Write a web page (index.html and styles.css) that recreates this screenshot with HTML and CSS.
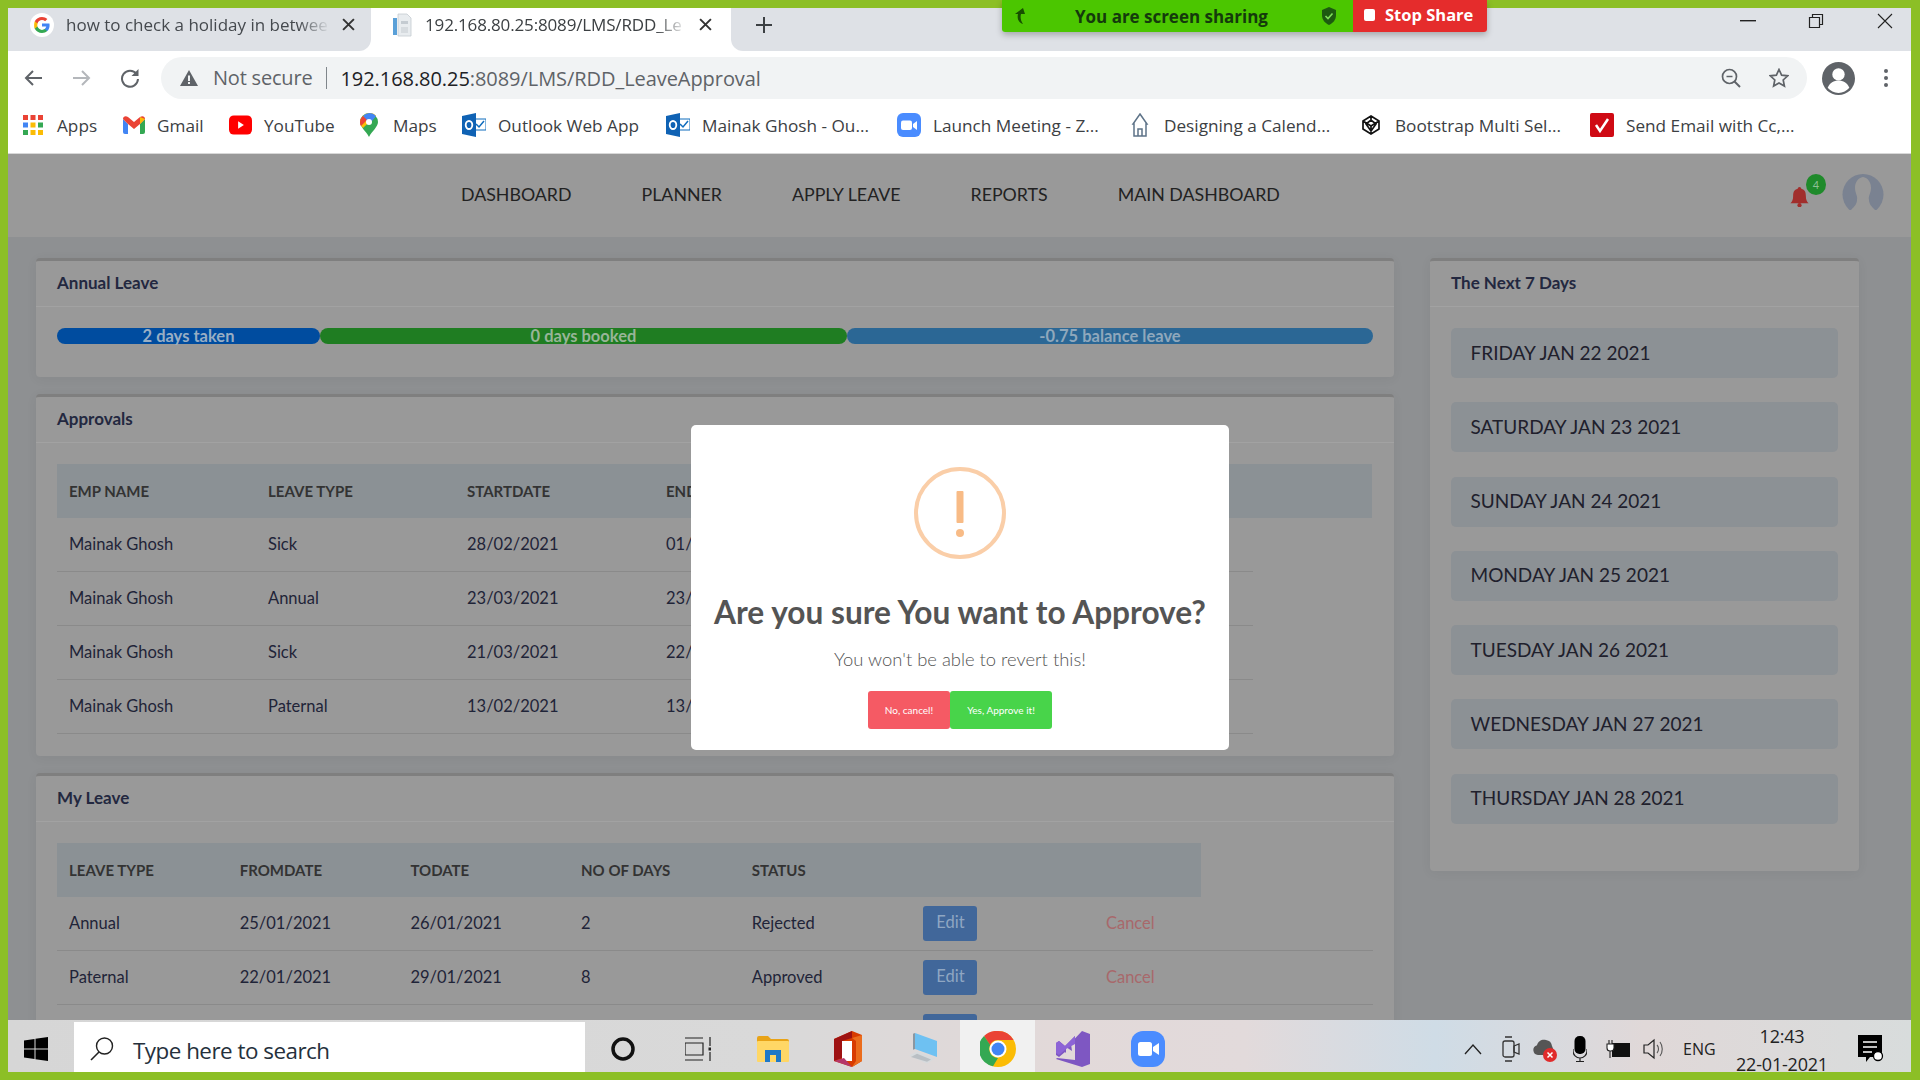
FILE: index.html
```html
<!DOCTYPE html>
<html lang="en">
<head>
<meta charset="utf-8">
<title>RDD Leave Approval</title>
<link rel="stylesheet" href="styles.css">
</head>
<body>
<div class="screen">
  <div class="sharebar">
    <div class="share-green">
      <svg class="share-arrow" viewBox="0 0 14 16"><path d="M10 0 2 6h3c-1 4 0 8 5 10-2-3-3-6-2-10h4z" fill="#174f00"/></svg>
      <span class="share-text">You are screen sharing</span>
      <svg class="share-shield" viewBox="0 0 16 18"><path d="M8 0l7 3v5c0 5-3 8-7 10-4-2-7-5-7-10V3z" fill="#1d5a10"/><path d="M4.500 9l2.500 2.500 4.500-5" fill="none" stroke="#7fe05a" stroke-width="1.600"/></svg>
    </div>
    <div class="share-red"><span class="stop-square"></span><span>Stop Share</span></div>
  </div>

  <div class="tabstrip">
    <div class="tab tab-off">
      <svg class="tab-icon" viewBox="0 0 24 24"><circle cx="12" cy="12" r="12" fill="#fff"/><path d="M19.600 12.200c0-.6-.1-1.100-.2-1.600H12v3h4.300c-.2 1-.8 1.800-1.600 2.400v2h2.600c1.500-1.400 2.300-3.400 2.300-5.800z" fill="#4285f4"/><path d="M12 20c2.200 0 4-.7 5.300-1.900l-2.600-2c-.7.500-1.600.8-2.700.8-2.100 0-3.900-1.400-4.500-3.300H4.800v2.100C6.100 18.300 8.800 20 12 20z" fill="#34a853"/><path d="M7.500 13.600c-.3-1-.3-2.100 0-3.200V8.300H4.800c-.9 1.800-.9 5.500 0 7.400z" fill="#fbbc05"/><path d="M12 7.100c1.200 0 2.200.4 3.100 1.200l2.300-2.300C16 4.800 14.200 4 12 4 8.800 4 6.100 5.800 4.800 8.300l2.700 2.100C8.100 8.500 9.900 7.100 12 7.100z" fill="#ea4335"/></svg>
      <span class="tab-title tab-title-off">how to check a holiday in betwee</span>
      <svg class="tab-x" viewBox="0 0 12 12"><path d="M1 1l10 10M11 1 1 11" stroke="#333" stroke-width="1.800"/></svg>
    </div>
    <div class="tab tab-on">
      <svg class="tab-icon-doc" viewBox="0 0 24 24"><path d="M7 1h9l4 4v18H7z" fill="#e8ecef" stroke="#c4cbd1" stroke-width=".8"/><rect x="2" y="5" width="4" height="17" fill="#5aa0d8"/><rect x="10" y="8" width="7" height="3" fill="#c4cbd1"/><rect x="10" y="14" width="7" height="6" fill="#d6dbdf"/></svg>
      <span class="tab-title tab-title-on">192.168.80.25:8089/LMS/RDD_Le</span>
      <svg class="tab-x" viewBox="0 0 12 12"><path d="M1 1l10 10M11 1 1 11" stroke="#333" stroke-width="1.800"/></svg>
    </div>
    <div class="tab-rest">
      <svg class="tab-plus" viewBox="0 0 18 18"><path d="M9 1v16M1 9h16" stroke="#3c4043" stroke-width="2"/></svg>
      <div class="winctl">
        <svg class="win-min" viewBox="0 0 16 2"><rect width="16" height="1.400" fill="#222"/></svg>
        <svg class="win-max" viewBox="0 0 16 16"><path d="M1.500 4.500h10v10h-10zM4.500 4.500v-3h10v10h-3" fill="none" stroke="#222" stroke-width="1.200"/></svg>
        <svg class="win-close" viewBox="0 0 16 16"><path d="M1 1l14 14M15 1 1 15" stroke="#222" stroke-width="1.100"/></svg>
      </div>
    </div>
  </div>

  <div class="toolbar">
    <svg class="tb-nav" viewBox="0 0 20 20"><path d="M19 10H3M10 3l-7 7 7 7" fill="none" stroke="#5f6368" stroke-width="2"/></svg>
    <svg class="tb-nav" viewBox="0 0 20 20"><path d="M1 10h16M10 3l7 7-7 7" fill="none" stroke="#b4b7bb" stroke-width="2"/></svg>
    <svg class="tb-nav tb-reload" viewBox="0 0 20 20"><path d="M16.500 6A8 8 0 1 0 18 11" fill="none" stroke="#5f6368" stroke-width="2"/><path d="M18.500 1v7h-7z" fill="#5f6368"/></svg>
    <div class="omnibox">
      <svg class="warn" viewBox="0 0 18 16"><path d="M9 0l9 16H0z" fill="#5f6368"/><rect x="8" y="5.500" width="2" height="5.500" fill="#f1f3f4"/><rect x="8" y="12" width="2" height="2" fill="#f1f3f4"/></svg>
      <span class="notsecure">Not secure</span>
      <span class="url"><span class="url-host">192.168.80.25</span>:8089/LMS/RDD_LeaveApproval</span>
      <svg class="omni-zoom" viewBox="0 0 20 20"><circle cx="8.500" cy="8.500" r="7" fill="none" stroke="#5f6368" stroke-width="1.700"/><path d="M13.500 13.500 19 19" stroke="#5f6368" stroke-width="2"/><path d="M5.500 8.500h6" stroke="#5f6368" stroke-width="1.500"/></svg>
      <svg class="omni-star" viewBox="0 0 20 20"><path d="M10 1.500l2.600 5.600 6.100.7-4.500 4.200 1.200 6L10 15l-5.400 3 1.200-6L1.300 7.800l6.100-.7z" fill="none" stroke="#5f6368" stroke-width="1.700"/></svg>
    </div>
    <svg class="avatar-chrome" viewBox="0 0 32 32"><circle cx="16" cy="16" r="16" fill="#5f6368"/><circle cx="16" cy="12" r="6" fill="#fff"/><path d="M5.500 25c2-5 6-7 10.500-7s8.500 2 10.500 7c-2.500 3-6.300 5-10.500 5S8 28 5.500 25z" fill="#fff"/></svg>
    <svg class="menu-dots" viewBox="0 0 4 18"><circle cx="2" cy="2" r="2" fill="#5f6368"/><circle cx="2" cy="9" r="2" fill="#5f6368"/><circle cx="2" cy="16" r="2" fill="#5f6368"/></svg>
  </div>

  <div class="bookmarks">
    <div class="bm">
      <svg class="bm-icon bm-apps" viewBox="0 0 20 20"><g><rect width="5" height="5" fill="#ea4335"/><rect x="7.500" width="5" height="5" fill="#ea4335"/><rect x="15" width="5" height="5" fill="#ea4335"/><rect y="7.500" width="5" height="5" fill="#4285f4"/><rect x="7.500" y="7.500" width="5" height="5" fill="#fbbc05"/><rect x="15" y="7.500" width="5" height="5" fill="#34a853"/><rect y="15" width="5" height="5" fill="#34a853"/><rect x="7.500" y="15" width="5" height="5" fill="#fbbc05"/><rect x="15" y="15" width="5" height="5" fill="#fbbc05"/></g></svg>
      <span>Apps</span>
    </div>
    <div class="bm">
      <svg class="bm-icon bm-gmail" viewBox="0 0 22 18"><path d="M0 3v13a2 2 0 0 0 2 2h3V8z" fill="#4285f4"/><path d="M22 3v13a2 2 0 0 1-2 2h-3V8z" fill="#34a853"/><path d="M0 3c0-3 3-3.500 5-2l6 5 6-5c2-1.500 5-1 5 2l-5 5-6 5-6-5z" fill="#ea4335"/><path d="M17 1l5 2-5 5z" fill="#fbbc05"/></svg>
      <span>Gmail</span>
    </div>
    <div class="bm">
      <svg class="bm-icon bm-yt" viewBox="0 0 24 20"><rect width="24" height="20" rx="5" fill="#f00"/><path d="M9.500 6v8l6-4z" fill="#fff"/></svg>
      <span>YouTube</span>
    </div>
    <div class="bm">
      <svg class="bm-icon bm-maps" viewBox="0 0 18 24"><path d="M9 0a9 9 0 0 1 9 9c0 5-6 9-9 15C6 18 0 14 0 9a9 9 0 0 1 9-9z" fill="#34a853"/><path d="M3 3a9 9 0 0 1 13-.5L3 15C1 13 0 11 0 9c0-2 1-4 3-6z" fill="#fbbc05"/><path d="M9 0a9 9 0 0 1 7 3.300L11 9H7L3 3a9 9 0 0 1 6-3z" fill="#4285f4"/><path d="M3 3 7 7 1 13C0 11.500 0 10 0 9c0-2 1-4 3-6z" fill="#ea4335"/><circle cx="9" cy="9" r="3" fill="#fff"/></svg>
      <span>Maps</span>
    </div>
    <div class="bm">
      <svg class="bm-icon bm-outlook" viewBox="0 0 24 24"><path d="M11 6h13v11H11z" fill="#fff" stroke="#0f6cbd" stroke-width="1"/><path d="M14 11l3 3 5-6" fill="none" stroke="#0f6cbd" stroke-width="1.500"/><path d="M0 3l14-3v24L0 21z" fill="#0f62b4"/><ellipse cx="7" cy="12" rx="3.300" ry="4" fill="none" stroke="#fff" stroke-width="1.800"/></svg>
      <span>Outlook Web App</span>
    </div>
    <div class="bm">
      <svg class="bm-icon bm-outlook" viewBox="0 0 24 24"><path d="M11 6h13v11H11z" fill="#fff" stroke="#0f6cbd" stroke-width="1"/><path d="M14 11l3 3 5-6" fill="none" stroke="#0f6cbd" stroke-width="1.500"/><path d="M0 3l14-3v24L0 21z" fill="#0f62b4"/><ellipse cx="7" cy="12" rx="3.300" ry="4" fill="none" stroke="#fff" stroke-width="1.800"/></svg>
      <span>Mainak Ghosh - Ou...</span>
    </div>
    <div class="bm">
      <svg class="bm-icon bm-zoom" viewBox="0 0 24 24"><rect width="24" height="24" rx="6" fill="#4a8cff"/><rect x="4" y="7.500" width="11" height="9.500" rx="2" fill="#fff"/><path d="M16 11l4-3v9l-4-3z" fill="#fff"/></svg>
      <span>Launch Meeting - Z...</span>
    </div>
    <div class="bm">
      <svg class="bm-icon bm-house" viewBox="0 0 18 24"><path d="M9 1l7 10-1 0v12H3V11H2z M7 23v-7h4v7" fill="none" stroke="#5e7388" stroke-width="1.500"/></svg>
      <span>Designing a Calend...</span>
    </div>
    <div class="bm">
      <svg class="bm-icon bm-boot" viewBox="0 0 20 20"><path d="M10 1l8 5v8l-8 5-8-5V6z M10 1v6M2 6l8 5 8-5M10 19v-8M5 9l5-4 5 4-5 7z" fill="none" stroke="#111" stroke-width="1.700"/></svg>
      <span>Bootstrap Multi Sel...</span>
    </div>
    <div class="bm">
      <svg class="bm-icon bm-check" viewBox="0 0 24 24"><rect width="24" height="24" rx="2" fill="#cf0a14"/><path d="M6 12l4 6 8-12" fill="none" stroke="#fff" stroke-width="2.500"/></svg>
      <span>Send Email with Cc,...</span>
    </div>
  </div>

  <div class="page">
    <nav class="sitenav">
      <a>DASHBOARD</a><a>PLANNER</a><a>APPLY LEAVE</a><a>REPORTS</a><a>MAIN DASHBOARD</a>
      <div class="nav-user">
        <div class="bell-wrap">
          <svg class="bell" viewBox="0 0 20 22"><path d="M10 0c1 0 2 1 2 2 4 1 5 4 5 8 0 4 1 6 3 8H0c2-2 3-4 3-8 0-4 1-7 5-8 0-1 1-2 2-2z" fill="#a12e2c"/><circle cx="10" cy="20" r="2.300" fill="#a12e2c"/></svg>
          <span class="badge">4</span>
        </div>
        <svg class="user-pic" viewBox="0 0 42 36"><circle cx="21" cy="20.500" r="20.500" fill="#7a8291"/><path d="M13 14c0-6 3-10 8-11 5 1 8 5 8 11 0 5-3 8-2 12 0 4 3 7 6 10H9c3-3 6-6 6-10 1-4-2-7-2-12z" fill="#999"/></svg>
      </div>
    </nav>

    <main class="dash">
      <div class="col-left">
        <section class="panel">
          <h2 class="panel-head">Annual Leave</h2>
          <div class="panel-body body-bar">
            <div class="bar">
              <div class="seg seg-taken">2 days taken</div>
              <div class="seg seg-booked">0 days booked</div>
              <div class="seg seg-balance">-0.75 balance leave</div>
            </div>
          </div>
        </section>

        <section class="panel">
          <h2 class="panel-head">Approvals</h2>
          <div class="panel-body">
            <div class="row row-head cols-approval head-wide">
              <span>EMP NAME</span><span>LEAVE TYPE</span><span>STARTDATE</span><span>ENDDATE</span>
            </div>
            <div class="row cols-approval row-approval"><span>Mainak Ghosh</span><span>Sick</span><span>28/02/2021</span><span>01/03/2021</span></div>
            <div class="row cols-approval row-approval"><span>Mainak Ghosh</span><span>Annual</span><span>23/03/2021</span><span>23/03/2021</span></div>
            <div class="row cols-approval row-approval"><span>Mainak Ghosh</span><span>Sick</span><span>21/03/2021</span><span>22/03/2021</span></div>
            <div class="row cols-approval row-approval"><span>Mainak Ghosh</span><span>Paternal</span><span>13/02/2021</span><span>13/02/2021</span></div>
          </div>
        </section>

        <section class="panel">
          <h2 class="panel-head">My Leave</h2>
          <div class="panel-body">
            <div class="row row-head cols-leave head-narrow">
              <span>LEAVE TYPE</span><span>FROMDATE</span><span>TODATE</span><span>NO OF DAYS</span><span>STATUS</span>
            </div>
            <div class="row cols-leave"><span>Annual</span><span>25/01/2021</span><span>26/01/2021</span><span>2</span><span>Rejected</span><a class="btn-edit">Edit</a><a class="link-cancel">Cancel</a></div>
            <div class="row cols-leave"><span>Paternal</span><span>22/01/2021</span><span>29/01/2021</span><span>8</span><span>Approved</span><a class="btn-edit">Edit</a><a class="link-cancel">Cancel</a></div>
            <div class="row cols-leave"><span></span><span></span><span></span><span></span><span></span><a class="btn-edit"></a></div>
          </div>
        </section>
      </div>

      <aside class="col-right">
        <section class="panel panel-days">
          <h2 class="panel-head">The Next 7 Days</h2>
          <div class="panel-body days">
            <div class="day">FRIDAY JAN 22 2021</div>
            <div class="day">SATURDAY JAN 23 2021</div>
            <div class="day">SUNDAY JAN 24 2021</div>
            <div class="day">MONDAY JAN 25 2021</div>
            <div class="day">TUESDAY JAN 26 2021</div>
            <div class="day">WEDNESDAY JAN 27 2021</div>
            <div class="day">THURSDAY JAN 28 2021</div>
          </div>
        </section>
      </aside>
    </main>

    <div class="modal">
      <svg class="modal-icon" viewBox="0 0 92 92"><circle cx="46" cy="46" r="44" fill="none" stroke="#facea8" stroke-width="4"/><rect x="42.500" y="24" width="7" height="32" rx="1" fill="#f8bb86"/><circle cx="46" cy="66" r="4" fill="#f8bb86"/></svg>
      <h1 class="modal-title">Are you sure You want to Approve?</h1>
      <p class="modal-text">You won't be able to revert this!</p>
      <div class="modal-actions">
        <button class="mbtn mbtn-no">No, cancel!</button>
        <button class="mbtn mbtn-yes">Yes, Approve it!</button>
      </div>
    </div>
  </div>

  <div class="taskbar">
    <div class="tb-start">
      <svg class="win-logo" viewBox="0 0 24 24"><path d="M0 3.500 10.500 2v9.500H0zM11.500 1.800 24 0v11.500H11.500zM0 12.500h10.500V22L0 20.500zM11.500 12.500H24V24l-12.500-1.800z" fill="#000"/></svg>
    </div>
    <div class="tb-search">
      <svg class="search-lens" viewBox="0 0 24 24"><circle cx="14.500" cy="9" r="8" fill="none" stroke="#222" stroke-width="1.400"/><path d="M9 15 1 23" stroke="#222" stroke-width="1.600"/></svg>
      <span>Type here to search</span>
    </div>
    <div class="tb-cell"><svg class="ti ti-cortana" viewBox="0 0 24 24"><circle cx="12" cy="12" r="10" fill="none" stroke="#111" stroke-width="3.500"/></svg></div>
    <div class="tb-cell"><svg class="ti ti-view" viewBox="0 0 26 24"><path d="M0 1h18M0 23h18M0 6h18v12H0z" fill="none" stroke="#222" stroke-width="1.200"/><path d="M25 0v9M25 15v9" stroke="#222" stroke-width="1.200"/><rect x="23.500" y="10.500" width="3" height="3" fill="#222"/></svg></div>
    <div class="tb-cell"><svg class="ti ti-folder" viewBox="0 0 32 26"><path d="M0 2a2 2 0 0 1 2-2h9l3 3h16a2 2 0 0 1 2 2v3H0z" fill="#e8a317"/><rect y="5" width="32" height="21" rx="1" fill="#ffd766"/><path d="M8 26V14h16v12h-5v-7h-6v7z" fill="#1e78c8"/></svg></div>
    <div class="tb-cell"><svg class="ti ti-office" viewBox="0 0 28 36"><path d="M18 0l10 4v26l-10 6L0 30V8z" fill="#d83b01"/><path d="M18 0 0 8v22l8-3V10l10-3z" fill="#9e1212"/><path d="M18 7l10-3v26l-10 6 4-6V10z" fill="#eb6c1c"/><path d="M8 10h10v20H8z" fill="#fff"/><path d="M0 30l18 6-8-9z" fill="#b5376a"/></svg></div>
    <div class="tb-cell"><svg class="ti ti-laptop" viewBox="0 0 32 40" preserveAspectRatio="none"><path d="M8 0l22 10v20L8 20z" fill="#6ec1f2"/><path d="M8 0 6 1v20l2-1z" fill="#8a97a2"/><path d="M2 28l8-5 18 9-8 6z" fill="#d6dadd"/><path d="M4 30l6-4 14 7-4 3z" fill="#b9bfc4"/></svg></div>
    <div class="tb-cell tb-active"><svg class="ti ti-chrome" viewBox="0 0 36 36"><circle cx="18" cy="18" r="18" fill="#fbbc05"/><path d="M18 0a18 18 0 0 1 15.600 9H18a9 9 0 0 0-8 5L4 5a18 18 0 0 1 14-5z" fill="#ea4335"/><path d="M4 5l6.200 9A9 9 0 0 0 18 27l-5 8.300A18 18 0 0 1 4 5z" fill="#34a853"/><circle cx="18" cy="18" r="8.500" fill="#fff"/><circle cx="18" cy="18" r="6.500" fill="#4285f4"/></svg></div>
    <div class="tb-cell"><svg class="ti ti-vs" viewBox="0 0 34 36"><path d="M26 0l8 3v30l-8 3L0 28l1-1 18 2V5L9 15l-6-5-3 2v12l3 2 6-5 1 1 0-6 6 4-1-7-6 5" fill="#7e57c2"/><path d="M0 12l3-2 6 5 10-10v8l-9 5-7 6-3-2z" fill="#8d64d6"/></svg></div>
    <div class="tb-cell"><svg class="ti ti-zoom" viewBox="0 0 34 36"><rect width="34" height="36" rx="12" fill="#4a8cff"/><rect x="7" y="11" width="14" height="14" rx="2.500" fill="#fff"/><path d="M22 16l6-4v12l-6-4z" fill="#fff"/></svg></div>

    <div class="tray">
      <svg class="tr tr-chev" viewBox="0 0 18 12"><path d="M1 11 9 2l8 9" fill="none" stroke="#222" stroke-width="1.300"/></svg>
      <svg class="tr tr-meet" viewBox="0 0 18 26"><rect x="1" y="5" width="11" height="16" rx="2" fill="none" stroke="#333" stroke-width="1.300"/><path d="M12 10l5-2v10l-5-2zM3 1h7M3 25h7" fill="none" stroke="#333" stroke-width="1.300"/></svg>
      <svg class="tr tr-cloud" viewBox="0 0 24 26"><path d="M5 19a5 5 0 0 1-1-9.800C5 5 9 3 13 4a7 7 0 0 1 6 6l2 5-8 4z" fill="#555"/><circle cx="17" cy="19" r="7" fill="#e02b2b"/><path d="M14.500 16.500l5 5M19.500 16.500l-5 5" stroke="#fff" stroke-width="1.500"/></svg>
      <svg class="tr tr-mic" viewBox="0 0 14 26"><rect x="1.500" width="11" height="18" rx="5" fill="#000"/><path d="M0 13v2a7 7 0 0 0 14 0v-2M7 22v4M3 25.500h8" fill="none" stroke="#222" stroke-width="1.200"/></svg>
      <svg class="tr tr-batt" viewBox="0 0 24 20"><rect x="6" y="4" width="18" height="14" fill="#111"/><path d="M3 1v4M6 1v4M1 5h7v4a3 3 0 0 1-3 3H4a3 3 0 0 1-3-3zM4 12v7" fill="#fff" stroke="#222" stroke-width="1.100"/></svg>
      <svg class="tr tr-vol" viewBox="0 0 22 22"><path d="M1 7h4l6-5v18l-6-5H1z" fill="none" stroke="#222" stroke-width="1.200"/><path d="M14 7c2 2 2 6 0 8M17 4c3 4 3 10 0 14" fill="none" stroke="#555" stroke-width="1.100"/></svg>
      <span class="tray-lang">ENG</span>
      <div class="clock"><span>12:43</span><span>22-01-2021</span></div>
      <svg class="tr tr-note" viewBox="0 0 26 28"><path d="M0 0h24v22H12l-4 5v-5H0z" fill="#000"/><path d="M5 7h14M5 12h14M5 17h9" stroke="#fff" stroke-width="1.500"/><circle cx="20" cy="21" r="4.500" fill="#fff" stroke="#000" stroke-width="1.300"/></svg>
    </div>
  </div>
</div>
</body>
</html>
```

FILE: styles.css
```css
* { box-sizing: border-box; }
html, body { margin: 0; height: 100%; overflow: hidden; }
body { background: #8cbf26; font-family: "Open Sans", "Noto Sans", sans-serif; }

.screen {
  position: relative;
  width: 1920px;
  height: 1080px;
  padding: 8px 9px 8px 8px;
  display: flex;
  flex-direction: column;
}

/* zoom share banner */
.sharebar {
  position: absolute;
  top: 0;
  left: 1002px;
  width: 485px;
  height: 32px;
  display: flex;
  box-shadow: 0 3px 6px rgba(0,0,0,.25);
  border-radius: 0 0 3px 3px;
  z-index: 5;
}
.share-green {
  width: 351px;
  background: #4bc600;
  display: flex;
  align-items: center;
  padding-left: 11px;
  border-bottom-left-radius: 3px;
}
.share-arrow { width: 14px; height: 16px; }
.share-text {
  width: 245px;
  padding-left: 48px;
  font: 700 17px "Open Sans", sans-serif;
  letter-spacing: -.02px;
  color: #143a0c;
  white-space: nowrap;
}
.share-shield { width: 16px; height: 18px; margin-left: 49px; }
.share-red {
  flex: 1;
  background: #e52c2c;
  color: #fff;
  font: 700 16.500px "Open Sans", sans-serif;
  display: flex;
  align-items: center;
  gap: 10px;
  padding: 0 0 3px 11px;
  border-bottom-right-radius: 3px;
}
.stop-square { width: 11px; height: 12px; background: #fff; border-radius: 2px; }

/* browser */
.tabstrip {
  height: 43px;
  flex: none;
  background: #fff;
  display: flex;
  align-items: stretch;
}
.tab { display: flex; align-items: center; padding-bottom: 10px; }
.tab-off { width: 363px; padding-left: 22px; background: #dee1e6; border-radius: 0 0 12px 0; }
.tab-on { width: 360px; background: #fff; padding-left: 20px; }
.tab-rest {
  flex: 1;
  display: flex;
  align-items: center;
  padding-bottom: 10px;
  background: #dee1e6;
  border-radius: 0 0 0 12px;
}
.tab-icon { width: 24px; height: 24px; flex: none; }
.tab-icon-doc { width: 24px; height: 24px; flex: none; }
.tab-title {
  font-size: 17px;
  white-space: nowrap;
  overflow: hidden;
  flex: none;
  -webkit-mask-image: linear-gradient(90deg, #000 88%, transparent 100%);
  mask-image: linear-gradient(90deg, #000 88%, transparent 100%);
}
.tab-title-off { width: 264px; margin-left: 12px; color: #45494e; }
.tab-title-on { width: 262px; margin-left: 10px; color: #3c4043; letter-spacing: -.15px; }
.tab-x { width: 13px; height: 13px; margin-left: 12px; flex: none; }
.tab-plus { width: 18px; height: 18px; margin-left: 24px; }
.winctl { margin-left: auto; display: flex; align-items: center; padding: 0 18px 7px 0; }
.win-min { width: 16px; height: 2px; }
.win-max { width: 16px; height: 16px; margin-left: 52px; }
.win-close { width: 16px; height: 16px; margin-left: 53px; }

.toolbar {
  height: 54px;
  flex: none;
  background: #fff;
  padding: 6px 0 6px 15px;
  display: flex;
  align-items: center;
}
.tb-nav { width: 20px; height: 20px; flex: none; margin-right: 29px; }
.tb-reload { margin-left: -1px; }
.omnibox {
  width: 1646px;
  height: 42px;
  margin-left: -8px;
  background: #f1f3f4;
  border-radius: 21px;
  display: flex;
  align-items: center;
  padding-left: 19px;
  font-size: 20px;
  white-space: nowrap;
}
.warn { width: 18px; height: 16px; flex: none; }
.notsecure {
  margin-left: 15px;
  padding-right: 14px;
  border-right: 1px solid #80868b;
  line-height: 22px;
  color: #5f6368;
  letter-spacing: -.2px;
}
.url { margin-left: 13px; color: #5f6368; letter-spacing: -.06px; }
.url-host { color: #202124; }
.omni-zoom { width: 20px; height: 20px; margin-left: auto; }
.omni-star { width: 20px; height: 20px; margin: 0 18px 0 28px; }
.avatar-chrome { width: 33px; height: 33px; margin-left: 15px; flex: none; }
.menu-dots { width: 4px; height: 18px; margin-left: 29px; flex: none; }

.bookmarks {
  height: 49px;
  flex: none;
  background: #fff;
  border-bottom: 1px solid #d8d8d8;
  padding: 0 0 8px 15px;
  display: grid;
  grid-template-columns: 100px 106px 131px 102px 204px 231px 234px 230px 229px 1fr;
  align-items: center;
  font-size: 17.200px;
  color: #3c4043;
  white-space: nowrap;
}
.bm { display: flex; align-items: center; gap: 12px; }
.bm-icon { flex: none; }
.bm-apps { width: 20px; height: 20px; margin-right: 2px; }
.bm-gmail { width: 22px; height: 18px; }
.bm-yt { width: 23px; height: 20px; }
.bm-maps { width: 18px; height: 24px; margin-right: 3px; }
.bm-outlook { width: 24px; height: 24px; }
.bm-zoom { width: 24px; height: 24px; }
.bm-house { width: 18px; height: 24px; margin-right: 3px; }
.bm-boot { width: 20px; height: 20px; margin-right: 2px; }
.bm-check { width: 24px; height: 24px; }

/* page */
.page {
  position: relative;
  flex: 1;
  min-height: 0;
  overflow: hidden;
  background: #8e9092;
  font-family: Lato, "Open Sans", sans-serif;
}
.sitenav {
  height: 83px;
  background: #999;
  display: flex;
  align-items: center;
  padding: 0 0 3px 453px;
  gap: 70px;
  font-size: 17.800px;
  color: #222;
}
.nav-user {
  margin-left: auto;
  align-self: flex-start;
  margin-top: 20px;
  display: flex;
  padding-right: 27px;
}
.bell-wrap { position: relative; width: 52px; height: 40px; }
.bell { position: absolute; left: 0; top: 13px; width: 19px; height: 20px; }
.badge {
  position: absolute;
  left: 16px;
  top: 0;
  width: 20px;
  height: 21px;
  border-radius: 50%;
  background: #1f8a2b;
  color: #8fbf96;
  font-size: 11px;
  line-height: 21px;
  text-align: center;
}
.user-pic { width: 42px; height: 36px; }

.dash {
  display: grid;
  grid-template-columns: 1358px 429px;
  gap: 36px;
  padding: 21px 0 0 28px;
  align-items: start;
}
.col-left { display: flex; flex-direction: column; gap: 17px; }
.panel {
  background: #999;
  border-top: 3px solid #7f7f7f;
  border-radius: 4px;
  box-shadow: 0 2px 12px rgba(0,0,0,.05);
}
.panel-head {
  margin: 0;
  height: 46px;
  padding: 0 0 2px 21px;
  display: flex;
  align-items: center;
  border-bottom: 1px solid #a2a2a2;
  font-size: 17px;
  font-weight: 700;
  color: #232840;
}
.panel-body { padding: 21px 21px 22px; }
.body-bar { padding-bottom: 33px; }

.bar { display: flex; height: 16px; }
.seg {
  height: 16px;
  border-radius: 8px;
  text-align: center;
  font-size: 16.500px;
  line-height: 16px;
  color: #98aec4;
  font-weight: 700;
}
.seg-taken { width: 263px; background: #004c9f; }
.seg-booked { width: 527px; background: #1f7d22; color: #98b598; }
.seg-balance { width: 526px; background: #2b6795; color: #8fa8bc; }

.row {
  display: grid;
  height: 54px;
  align-items: center;
  border-bottom: 1px solid #8a8a8a;
  font-size: 16.500px;
  color: #1f2438;
}
.row > span { padding: 0 0 1px 12px; white-space: nowrap; }
.row-head {
  background: #8b9195;
  border-bottom: 0;
  font-weight: 700;
  font-size: 15px;
  color: #333;
}
.cols-approval { grid-template-columns: repeat(6, 199px); }
.head-wide { width: 1315px; }
.row-approval { width: 1196px; }
.cols-leave { grid-template-columns: repeat(5, 170.700px) 183.500px 1fr; }
.head-narrow { width: 1144px; }
.btn-edit {
  width: 54px;
  height: 35px;
  margin-left: 13px;
  background: #41679a;
  border-radius: 3px;
  color: #8fa6c2;
  text-align: center;
  line-height: 32px;
}
.link-cancel { padding: 0 0 1px 12px; color: #a8686b; }

.days { display: flex; flex-direction: column; gap: 24.300px; padding-bottom: 47px; }
.day {
  height: 50px;
  display: flex;
  align-items: center;
  padding: 0 0 2px 19.500px;
  background: #8c9195;
  border-radius: 5px;
  font-size: 19px;
  color: #20202c;
}

/* sweetalert style modal: sits over the dimmed page */
.modal {
  position: absolute;
  left: 683px;
  top: 271px;
  width: 538px;
  height: 325px;
  background: #fff;
  border-radius: 5px;
  display: flex;
  flex-direction: column;
  align-items: center;
  padding-top: 42px;
  color: #545454;
}
.modal-icon { width: 92px; height: 92px; flex: none; }
.modal-title { margin: 29px 0 0; font-size: 31.650px; line-height: 48px; font-weight: 700; white-space: nowrap; }
.modal-text { margin: 12px 0 0; font-size: 18.400px; line-height: 22px; font-weight: 300; }
.modal-actions { display: flex; margin-top: 20.500px; }
.mbtn {
  height: 38px;
  border: 0;
  border-radius: 3px;
  color: #fff;
  font: 400 10px Lato, sans-serif;
  padding: 0;
}
.mbtn-no { width: 82px; background: #f55a64; }
.mbtn-yes { width: 102px; background: #48d44a; }

/* taskbar */
.taskbar {
  height: 52px;
  flex: none;
  display: flex;
  align-items: stretch;
  background: linear-gradient(90deg, #d6d6d6 0%, #d9d9d9 40%, #e2d9d9 55%, #e2dadb 65%, #cfdce6 75%, #e0d8d8 86%, #d8dcdc 100%);
}
.tb-start { width: 66px; display: flex; align-items: center; padding: 5px 0 0 16px; }
.win-logo { width: 24px; height: 24px; }
.tb-search {
  width: 511px;
  margin-top: 2px;
  background: #fff;
  display: flex;
  align-items: center;
  padding: 3px 0 0 16px;
  gap: 19px;
  font: 400 22.400px "Open Sans", sans-serif;
  letter-spacing: -.5px;
  color: #25303c;
}
.search-lens { width: 24px; height: 24px; flex: none; }
.tb-search span { padding-top: 3px; }
.tb-cell { width: 75px; display: flex; align-items: center; justify-content: center; padding-top: 5px; }
.tb-active { background: #f1f1f1; }
.ti { display: block; }
.ti-cortana { width: 24px; height: 24px; }
.ti-view { width: 26px; height: 24px; }
.ti-folder { width: 32px; height: 26px; }
.ti-office { width: 28px; height: 36px; }
.ti-laptop { width: 32px; height: 32px; }
.ti-chrome { width: 36px; height: 36px; }
.ti-vs { width: 34px; height: 36px; }
.ti-zoom { width: 34px; height: 36px; }

.tray {
  margin-left: auto;
  display: flex;
  align-items: center;
  padding: 5px 27px 0 0;
  color: #222;
}
.tr { flex: none; }
.tr-chev { width: 18px; height: 12px; margin-right: 20px; }
.tr-meet { width: 18px; height: 26px; margin-right: 13px; }
.tr-cloud { width: 24px; height: 26px; margin-right: 16px; }
.tr-mic { width: 14px; height: 26px; margin-right: 19px; }
.tr-batt { width: 24px; height: 20px; margin-right: 13px; }
.tr-vol { width: 22px; height: 22px; margin-right: 18px; }
.tray-lang { font-size: 16px; width: 33px; margin-right: 16px; }
.clock {
  width: 100px;
  align-self: stretch;
  margin-top: -5px;
  display: flex;
  flex-direction: column;
  align-items: center;
  gap: 12px;
  padding-top: 8px;
  font-size: 18px;
  line-height: 16px;
  margin-right: 26px;
  letter-spacing: -.2px;
}
.tr-note { width: 26px; height: 28px; }
```
